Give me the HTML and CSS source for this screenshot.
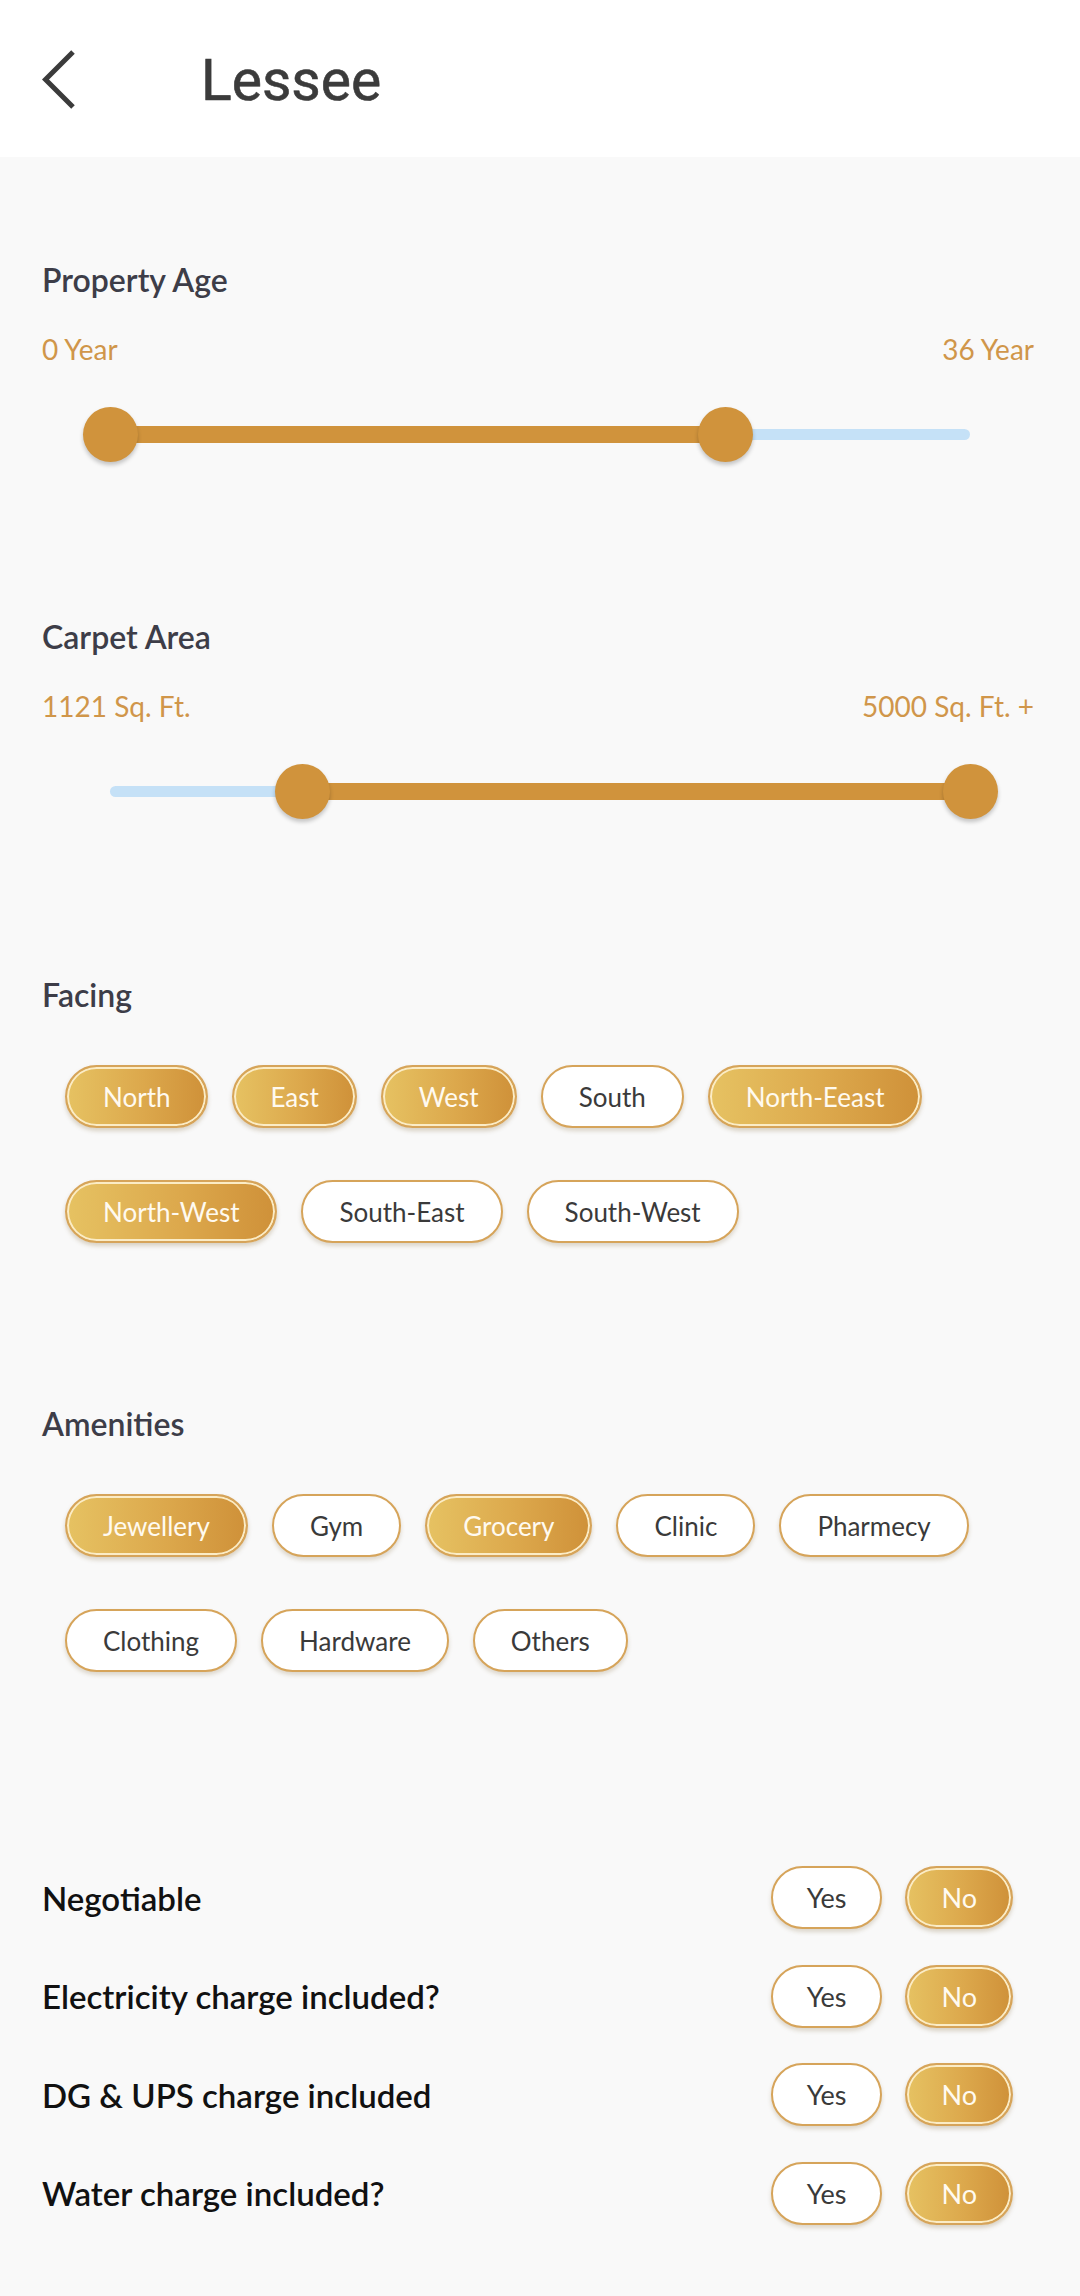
FILE: index.html
```html
<!DOCTYPE html>
<html lang="en">
<head>
<meta charset="utf-8">
<title>Lessee</title>
<link rel="stylesheet" href="styles.css">
</head>
<body>
<header class="appbar">
  <button class="back" aria-label="Back">
    <svg width="40" height="60" viewBox="0 0 40 60"><polyline points="31,3 3.5,30.5 31,58" fill="none" stroke="#3b3b3b" stroke-width="5"/></svg>
  </button>
  <h1 class="title">Lessee</h1>
</header>
<main class="content">
  <section class="range-section">
    <h2 class="label">Property Age</h2>
    <div class="values"><span>0 Year</span><span>36 Year</span></div>
    <div class="slider">
      <div class="track"></div>
      <div class="active" style="left:0%;width:71.6%"></div>
      <div class="thumb" style="left:0%"></div>
      <div class="thumb" style="left:71.6%"></div>
    </div>
  </section>
  <section class="range-section">
    <h2 class="label">Carpet Area</h2>
    <div class="values"><span>1121 Sq. Ft.</span><span>5000 Sq. Ft. +</span></div>
    <div class="slider">
      <div class="track"></div>
      <div class="active" style="left:22.4%;width:77.6%"></div>
      <div class="thumb" style="left:22.4%"></div>
      <div class="thumb" style="left:100%"></div>
    </div>
  </section>
  <section class="chip-section facing">
    <h2 class="label">Facing</h2>
    <div class="chips">
      <div class="chip-row">
        <span class="chip on">North</span>
        <span class="chip on">East</span>
        <span class="chip on">West</span>
        <span class="chip">South</span>
        <span class="chip on">North-Eeast</span>
      </div>
      <div class="chip-row">
        <span class="chip on">North-West</span>
        <span class="chip">South-East</span>
        <span class="chip">South-West</span>
      </div>
    </div>
  </section>
  <section class="chip-section amenities">
    <h2 class="label">Amenities</h2>
    <div class="chips">
      <div class="chip-row">
        <span class="chip on">Jewellery</span>
        <span class="chip">Gym</span>
        <span class="chip on">Grocery</span>
        <span class="chip">Clinic</span>
        <span class="chip">Pharmecy</span>
      </div>
      <div class="chip-row">
        <span class="chip">Clothing</span>
        <span class="chip">Hardware</span>
        <span class="chip">Others</span>
      </div>
    </div>
  </section>
  <section class="toggles">
    <div class="toggle-row">
      <span class="toggle-label">Negotiable</span>
      <div class="toggle-group"><span class="chip yes">Yes</span><span class="chip on no">No</span></div>
    </div>
    <div class="toggle-row">
      <span class="toggle-label">Electricity charge included?</span>
      <div class="toggle-group"><span class="chip yes">Yes</span><span class="chip on no">No</span></div>
    </div>
    <div class="toggle-row">
      <span class="toggle-label">DG &amp; UPS charge included</span>
      <div class="toggle-group"><span class="chip yes">Yes</span><span class="chip on no">No</span></div>
    </div>
    <div class="toggle-row">
      <span class="toggle-label">Water charge included?</span>
      <div class="toggle-group"><span class="chip yes">Yes</span><span class="chip on no">No</span></div>
    </div>
  </section>
</main>
</body>
</html>
```
FILE: styles.css
```css
* { box-sizing: border-box; }
html, body { margin: 0; padding: 0; }
body {
  background: #f9f9f9;
  font-family: "Lato", "Noto Sans", sans-serif;
  width: 1080px;
  min-height: 2296px;
}
.appbar {
  height: 157px;
  background: #ffffff;
  display: flex;
  align-items: center;
  padding-left: 42px;
}
.back {
  border: 0;
  background: none;
  padding: 0;
  width: 40px;
  height: 60px;
  display: block;
}
.back svg { display: block; }
.title {
  margin: 0 0 0 119px;
  padding-top: 4px;
  font-family: "Roboto", sans-serif;
  font-weight: 400;
  font-size: 57px;
  line-height: 1;
  color: #3b3b3b;
  -webkit-text-stroke: 0.6px #3b3b3b;
}
.content {
  padding: 103px 46px 0 42px;
}
.label {
  margin: 0;
  font-weight: 600;
  font-size: 32px;
  line-height: 40px;
  color: #3d3d48;
}
.values {
  margin-top: 29px;
  display: flex;
  justify-content: space-between;
  font-size: 28px;
  line-height: 40px;
  color: #d0964a;
}
.slider {
  position: relative;
  margin: 35px 0 0 68px;
  width: 860px;
  height: 60px;
}
.track {
  position: absolute;
  left: 0;
  right: 0;
  top: 24.5px;
  height: 11px;
  border-radius: 6px;
  background: #c5e1f7;
}
.active {
  position: absolute;
  top: 21.5px;
  height: 17px;
  background: #d0933c;
}
.thumb {
  position: absolute;
  top: 2.5px;
  width: 55px;
  height: 55px;
  margin-left: -27.5px;
  border-radius: 50%;
  background: #d0933c;
  box-shadow: 0 3px 4px rgba(0, 0, 0, 0.22);
}
.range-section + .range-section { margin-top: 153px; }
.facing { margin-top: 154px; }
.amenities { margin-top: 161px; }
.chips {
  margin-top: 50px;
  padding-left: 23px;
  display: flex;
  flex-direction: column;
  gap: 52px;
}
.chip-row {
  display: flex;
  gap: 24px;
}
.chip {
  height: 63px;
  display: inline-flex;
  align-items: center;
  justify-content: center;
  padding: 0 36px;
  border-radius: 32px;
  border: 2px solid #d6a45a;
  background: #ffffff;
  color: #3a3a3a;
  font-size: 26px;
  line-height: 1;
  white-space: nowrap;
  box-shadow: 0 3px 4px rgba(120, 90, 40, 0.22);
}
.chip.on {
  background: linear-gradient(90deg, #e6c262 0%, #dca84c 55%, #cf9139 100%);
  color: #fffaf0;
  box-shadow: inset 0 0 0 2px #fbecc6, 0 3px 4px rgba(120, 90, 40, 0.25);
}
.toggles {
  margin-top: 194px;
  display: flex;
  flex-direction: column;
  gap: 35.5px;
}
.toggle-row {
  display: flex;
  align-items: center;
  justify-content: space-between;
  height: 63px;
}
.toggle-label {
  font-weight: 600;
  font-size: 33px;
  line-height: 40px;
  color: #111111;
}
.toggle-group {
  display: flex;
  gap: 23px;
  margin-right: 21px;
}
.toggle-group .chip { padding: 0 34px; font-size: 27px; }
```
